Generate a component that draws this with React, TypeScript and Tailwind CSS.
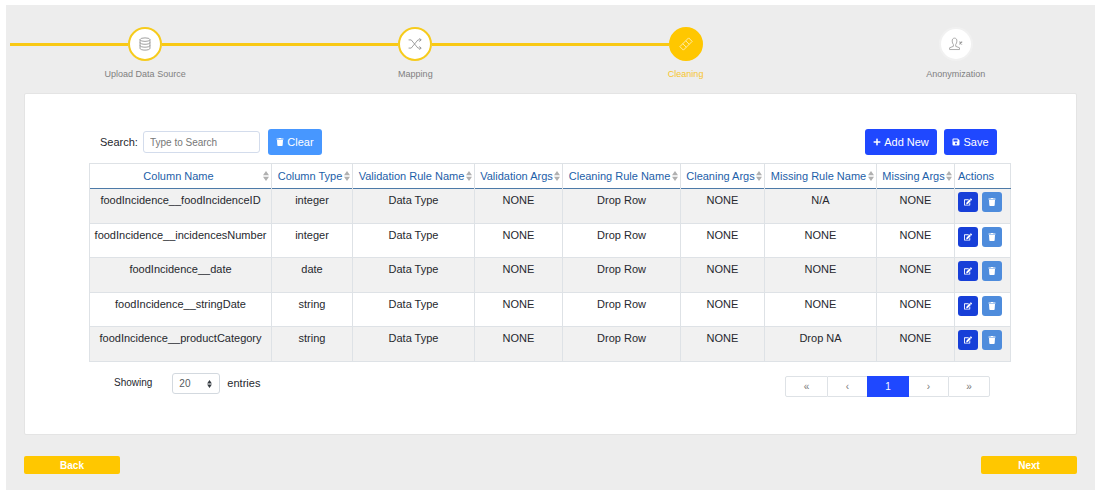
import React from "react";
import { FaTrash, FaPlus, FaSave, FaEdit } from "react-icons/fa";

type Step = { label: string; state: "done" | "active" | "todo"; icon: React.ReactNode };

const iconProps = {
  viewBox: "0 0 24 24",
  fill: "none",
  stroke: "currentColor",
  strokeWidth: 1.4,
  className: "size-3.5",
  "aria-hidden": true,
} as const;

const steps: Step[] = [
  {
    label: "Upload Data Source",
    state: "done",
    icon: (
      <svg {...iconProps}>
        <ellipse cx="12" cy="4.5" rx="8.5" ry="3" />
        <path d="M3.500 4.500v15c0 1.700 3.800 3 8.500 3s8.500-1.300 8.500-3v-15M3.500 9.500c0 1.700 3.800 3 8.500 3s8.500-1.300 8.500-3M3.500 14.500c0 1.700 3.800 3 8.500 3s8.500-1.300 8.500-3" />
      </svg>
    ),
  },
  {
    label: "Mapping",
    state: "done",
    icon: (
      <svg {...iconProps}>
        <path d="M1 5h4.500L17 19h5.500M1 19h4.500L17 5h5.500M19.500 2l3 3-3 3M19.500 16l3 3-3 3" />
      </svg>
    ),
  },
  {
    label: "Cleaning",
    state: "active",
    icon: (
      <svg {...iconProps}>
        <path d="M1.500 16.500l15-15 6 6-15 15zM6.500 11.500l6 6M11.500 6.500l6 6" />
      </svg>
    ),
  },
  {
    label: "Anonymization",
    state: "todo",
    icon: (
      <svg {...iconProps}>
        <path d="M9.500 2C6.500 2 5.500 4 5.500 7c0 2.500.8 4.500 2 5.800V16L1 18.500V21.500h17V18.500L11.500 16v-3.200c1.200-1.300 2-3.300 2-5.800 0-3-1-5-4-5z" />
        <path d="M18 8l4.500 4.500M22.500 8L18 12.500" strokeWidth="2" />
      </svg>
    ),
  },
];

const circleStyle = {
  done: "border-2 border-[#f6cb1c] bg-white text-[#8a8a8a]",
  active: "border-2 border-[#ffc700] bg-[#ffc700] text-[#fff3cc]",
  todo: "border-2 border-[#f1f1f1] bg-white text-[#999999]",
};

const labelStyle = {
  done: "text-[#808080]",
  active: "text-[#f7c52c]",
  todo: "text-[#808080]",
};

const columns = [
  { name: "Column Name", width: "w-[182px]" },
  { name: "Column Type", width: "w-[81px]" },
  { name: "Validation Rule Name", width: "w-[122px]" },
  { name: "Validation Args", width: "w-[88px]" },
  { name: "Cleaning Rule Name", width: "w-[118px]" },
  { name: "Cleaning Args", width: "w-[84px]" },
  { name: "Missing Rule Name", width: "w-[112px]" },
  { name: "Missing Args", width: "w-[78px]" },
];

const rows = [
  ["foodIncidence__foodIncidenceID", "integer", "Data Type", "NONE", "Drop Row", "NONE", "N/A", "NONE"],
  ["foodIncidence__incidencesNumber", "integer", "Data Type", "NONE", "Drop Row", "NONE", "NONE", "NONE"],
  ["foodIncidence__date", "date", "Data Type", "NONE", "Drop Row", "NONE", "NONE", "NONE"],
  ["foodIncidence__stringDate", "string", "Data Type", "NONE", "Drop Row", "NONE", "NONE", "NONE"],
  ["foodIncidence__productCategory", "string", "Data Type", "NONE", "Drop Row", "NONE", "Drop NA", "NONE"],
];

function SortArrows({ className }: { className: string }) {
  return (
    <svg viewBox="0 0 6 10" className={className} fill="currentColor" aria-hidden="true">
      <path d="M3 0l3 4.300H0zM3 10l3-4.300H0z" />
    </svg>
  );
}

function Stepper() {
  return (
    <ol className="mx-1 grid grid-cols-4 pt-[22px]">
      {steps.map((step, i) => (
        <li key={step.label} className="flex flex-col items-center">
          <div className="flex w-full items-center">
            <span className={`h-[3px] flex-1 ${step.state === "todo" ? "" : "bg-[#f9c914]"}`} />
            <span className={`flex size-[34px] items-center justify-center rounded-full ${circleStyle[step.state]}`}>
              {step.icon}
            </span>
            <span className={`h-[3px] flex-1 ${i < 2 ? "bg-[#f9c914]" : ""}`} />
          </div>
          <span className={`mt-[7px] text-[9px] leading-3 ${labelStyle[step.state]}`}>{step.label}</span>
        </li>
      ))}
    </ol>
  );
}

function Toolbar() {
  const button = "flex h-[26px] items-center justify-center gap-[3px] rounded-[3px] text-[11px] text-white";
  return (
    <div className="flex items-center pr-3.5 pl-[11px]">
      <label htmlFor="search" className="text-[11px]">
        Search:
      </label>
      <input
        id="search"
        type="text"
        placeholder="Type to Search"
        className="ml-[5px] h-[22px] w-[117px] rounded-[3px] border border-[#d3dcec] px-1.5 text-[10px] placeholder:text-[#777777]"
      />
      <button type="button" className={`${button} ml-2 w-[54px] bg-[#4797ff]`}>
        <FaTrash className="size-2" />
        Clear
      </button>
      <button type="button" className={`${button} ml-auto w-[72px] bg-[#1f48ff]`}>
        <FaPlus className="size-2" />
        Add New
      </button>
      <button type="button" className={`${button} ml-[7px] w-[53px] bg-[#1f48ff]`}>
        <FaSave className="size-2" />
        Save
      </button>
    </div>
  );
}

function RulesTable() {
  return (
    <table className="mt-2 w-full table-fixed border-collapse border border-[#dee2e6] text-center text-[11px] leading-4">
      <colgroup>
        {columns.map((c) => (
          <col key={c.name} className={c.width} />
        ))}
        <col className="w-[56px]" />
      </colgroup>
      <thead className="text-[#1d60a8]">
        <tr className="h-[25px] border-b border-[#4d7aa8]">
          {columns.map((c) => (
            <th key={c.name} scope="col" className="border-x border-x-[#dee2e6] p-0 font-normal whitespace-nowrap">
              <div className="flex items-center pr-0.5 pl-1">
                <span className="flex-1">{c.name}</span>
                <SortArrows className="h-2.5 w-1.5 shrink-0 text-[#b0b0b0]" />
              </div>
            </th>
          ))}
          <th scope="col" className="px-[3px] text-left font-normal">
            Actions
          </th>
        </tr>
      </thead>
      <tbody>
        {rows.map((row) => (
          <tr key={row[0]} className="border-b border-[#dee2e6] odd:h-[35px] odd:bg-[#f1f1f1] even:h-[34px]">
            {row.map((cell, i) => (
              <td key={i} className="border-x border-[#dee2e6] px-0 pt-[3px] align-top whitespace-nowrap">
                {cell}
              </td>
            ))}
            <td className="p-0 pt-[3px] pl-[3px] align-top">
              <div className="flex gap-1">
                <button
                  type="button"
                  aria-label={`Edit ${row[0]}`}
                  className="flex size-5 items-center justify-center rounded-[3px] bg-[#173fd8] text-white"
                >
                  <FaEdit className="size-2" />
                </button>
                <button
                  type="button"
                  aria-label={`Delete ${row[0]}`}
                  className="flex size-5 items-center justify-center rounded-[3px] bg-[#4e8cdc] text-white"
                >
                  <FaTrash className="size-2" />
                </button>
              </div>
            </td>
          </tr>
        ))}
      </tbody>
    </table>
  );
}

function TableFooter() {
  const page = "flex h-[21px] items-center justify-center border-[#dee2e6]";
  return (
    <div className="mt-[11px] flex items-start pr-[21px] pl-[25px]">
      <label htmlFor="page-size" className="text-[10px] leading-5">
        Showing
      </label>
      <div className="relative ml-5">
        <select
          id="page-size"
          defaultValue="20"
          className="block h-[21px] w-12 appearance-none rounded-[3px] border border-[#d3d9df] bg-white pl-1.5 text-[10px] text-[#555b61]"
        >
          <option>20</option>
          <option>50</option>
        </select>
        <SortArrows className="pointer-events-none absolute top-[7px] right-2 h-2 w-[5px] text-[#343a40]" />
      </div>
      <span className="ml-[7px] text-[11px] leading-5">entries</span>
      <nav aria-label="Pagination" className="mt-[3px] ml-auto flex text-[10px] text-[#777777]">
        <button type="button" aria-label="First page" className={`${page} w-[43px] rounded-l-[2px] border`}>
          «
        </button>
        <button type="button" aria-label="Previous page" className={`${page} w-[39px] border-y`}>
          ‹
        </button>
        <button type="button" aria-current="page" className="h-[21px] w-[42px] bg-[#1f48ff] text-[10px] text-white">
          1
        </button>
        <button type="button" aria-label="Next page" className={`${page} w-[39px] border-y`}>
          ›
        </button>
        <button type="button" aria-label="Last page" className={`${page} w-[42px] rounded-r-[2px] border`}>
          »
        </button>
      </nav>
    </div>
  );
}

export default function App() {
  const navButton = "h-[18px] w-24 rounded-[2px] bg-[#ffc700] text-[10px] font-bold text-white";
  return (
    <div className="bg-white pt-[5px] pr-[5px] pb-2.5 pl-1.5 font-['Liberation_Sans',Arial,sans-serif] text-[#26282e]">
      <main className="bg-[#ededed] pb-4">
        <Stepper />
        <section className="mx-[18px] mt-[13px] rounded-[2px] border border-[#e4e4e4] bg-white pt-[35px] pr-[65px] pb-[37px] pl-16">
          <Toolbar />
          <RulesTable />
          <TableFooter />
        </section>
        <div className="mx-[18px] mt-[21px] flex justify-between">
          <button type="button" className={navButton}>
            Back
          </button>
          <button type="button" className={navButton}>
            Next
          </button>
        </div>
      </main>
    </div>
  );
}
